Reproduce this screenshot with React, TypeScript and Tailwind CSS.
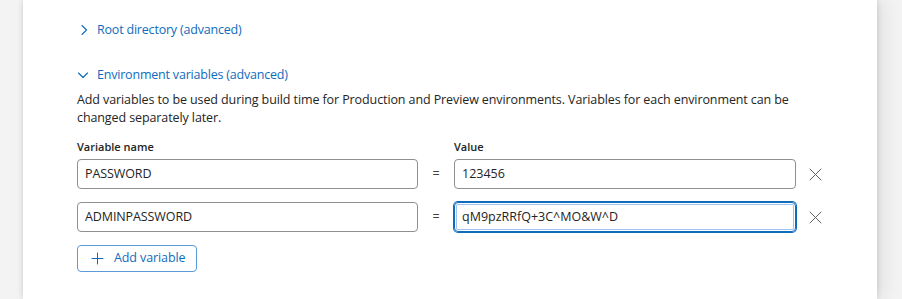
import { useState } from "react";

type EnvVar = { name: string; value: string };

const initial: EnvVar[] = [
  { name: "PASSWORD", value: "123456" },
  { name: "ADMINPASSWORD", value: "qM9pzRRfQ+3C^MO&W^D" },
];

function Chevron({ open }: { open: boolean }) {
  return (
    <svg width="12" height="12" viewBox="0 0 12 12" fill="none" className="shrink-0">
      {open ? (
        <path d="M1.5 4 6 8.5 10.5 4" stroke="#0f6cbd" strokeWidth="1.1" strokeLinecap="round" strokeLinejoin="round" />
      ) : (
        <path d="M4 1.5 8.5 6 4 10.5" stroke="#0f6cbd" strokeWidth="1.1" strokeLinecap="round" strokeLinejoin="round" />
      )}
    </svg>
  );
}

function Dismiss() {
  return (
    <svg width="13" height="13" viewBox="0 0 13 13" fill="none">
      <path d="M1 1 12 12M12 1 1 12" stroke="#616161" strokeWidth="1" strokeLinecap="round" />
    </svg>
  );
}

export default function App() {
  const [vars] = useState(initial);

  return (
    <div className="min-h-screen bg-[#f3f3f3] font-['Open_Sans',sans-serif] text-[12.5px] text-[#242424]">
      <div className="ml-[23px] mr-[25px] min-h-[299px] bg-white pl-[54px] pr-[49px] pt-[20px] shadow-[0_0_6px_rgba(0,0,0,0.16),10px_0_16px_rgba(0,0,0,0.06)]">
        <button className="flex h-[20px] items-center gap-[7px] pl-[1px] tracking-[-0.2px] text-[#0f6cbd]">
          <Chevron open={false} />
          Root directory (advanced)
        </button>

        <button className="mt-[25px] flex h-[20px] items-center gap-[8px] tracking-[-0.2px] text-[#0f6cbd]">
          <Chevron open />
          Environment variables (advanced)
        </button>

        <p className="mt-[6px] leading-[18px] tracking-[-0.1px]">
          Add variables to be used during build time for Production and Preview environments. Variables for each environment can be
          changed separately later.
        </p>

        <div className="mt-[11px] grid grid-cols-[341px_36px_342px_32px] items-center">
          <label className="text-[11px] font-semibold leading-[18px]">Variable name</label>
          <span />
          <label className="text-[11px] font-semibold leading-[18px]">Value</label>
          <span />
        </div>

        <div className="mt-[3px] flex flex-col gap-[13px]">
          {vars.map((v, i) => {
            const focused = i === vars.length - 1;
            return (
              <div key={v.name} className="grid grid-cols-[341px_36px_342px_32px] items-center">
                <div className="flex h-[30px] items-center rounded-[4px] border border-[#8f8f8f] px-[7px] tracking-[-0.1px]">
                  {v.name}
                </div>
                <span className="text-center text-[#424242]">=</span>
                <div
                  className={`flex h-[30px] items-center rounded-[4px] border px-[7px] ${
                    focused
                      ? "border-[#0f6cbd] shadow-[0_0_0_1px_#0f6cbd,inset_0_0_0_1px_#ffffff,inset_0_0_0_2px_#9fc3ec]"
                      : "border-[#8f8f8f]"
                  }`}
                >
                  {v.value}
                </div>
                <button className="flex justify-end pr-[6px]">
                  <Dismiss />
                </button>
              </div>
            );
          })}
        </div>

        <button className="mt-[13px] flex h-[27px] w-[120px] items-center gap-[10px] rounded-[4px] border border-[#5b9ad8] pl-[13px] tracking-[-0.1px] text-[#0f6cbd]">
          <svg width="13" height="13" viewBox="0 0 13 13" fill="none">
            <path d="M6.5 1v11M1 6.5h11" stroke="#0f6cbd" strokeWidth="1" strokeLinecap="round" />
          </svg>
          Add variable
        </button>
      </div>
    </div>
  );
}
